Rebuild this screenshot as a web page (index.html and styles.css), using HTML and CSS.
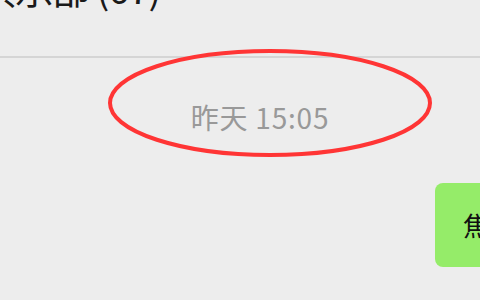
FILE: index.html
```html
<!DOCTYPE html>
<html lang="zh">
<head>
<meta charset="utf-8">
<link rel="stylesheet" href="styles.css">
</head>
<body>
<div class="window">
  <header class="header">
    <span class="title">俱乐部 (67)</span>
  </header>
  <main class="chat">
    <div class="time-row">
      <span class="time">昨天 15:05</span>
      <svg class="mark" width="328" height="110" viewBox="0 0 328 110">
        <ellipse cx="164" cy="55" rx="160" ry="52" fill="none" stroke="#ff3535" stroke-width="4"/>
      </svg>
    </div>
    <div class="msg-row">
      <div class="bubble">焦点</div>
    </div>
  </main>
</div>
</body>
</html>
```

FILE: styles.css
```css
html, body {
  margin: 0;
  padding: 0;
  background: #ededed;
  overflow: hidden;
}
.window {
  width: 480px;
  height: 300px;
  overflow: hidden;
  font-family: "Noto Sans CJK SC", "Noto Sans", sans-serif;
}
.header {
  height: 56px;
  border-bottom: 2px solid #d5d5d5;
  overflow: hidden;
  position: relative;
}
.title {
  display: block;
  margin-top: -34px;
  margin-left: -22px;
  font-size: 38px;
  line-height: 44px;
  letter-spacing: -1px;
  color: #1a1a1a;
  white-space: nowrap;
}
.chat {
  position: relative;
}
.time-row {
  position: relative;
  display: flex;
  justify-content: center;
  padding-top: 42px;
  padding-left: 40px;
}
.time {
  font-size: 28px;
  line-height: 34px;
  letter-spacing: 0.8px;
  color: #999999;
}
.mark {
  position: absolute;
  left: 106px;
  top: -10px;
}
.msg-row {
  display: flex;
  justify-content: flex-start;
  padding-left: 435px;
  margin-top: 49px;
}
.bubble {
  background: #95ec69;
  border-radius: 8px;
  height: 84px;
  padding: 0 20px 0 28px;
  font-size: 26px;
  line-height: 84px;
  color: #111;
  white-space: nowrap;
}
```
